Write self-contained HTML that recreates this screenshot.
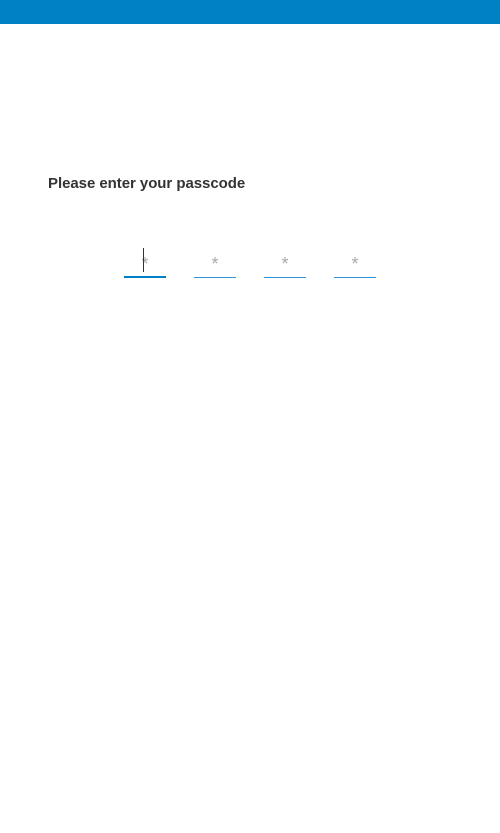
<!DOCTYPE html>
<html><head><style>
body{margin:0;width:500px;height:833px;background:#fff;position:relative;overflow:hidden;font-family:"Liberation Sans",sans-serif}
.bar{position:absolute;left:0;top:0;width:500px;height:24px;background:#0081c6}
.t{position:absolute;left:48px;top:175px;font-size:15px;font-weight:bold;color:#333;letter-spacing:-0.05px}
.f{position:absolute;top:250px;width:42px;height:28px}
.f span{position:absolute;left:0;width:42px;text-align:center;top:4px;font-size:18px;color:#aaa}
.f i{position:absolute;left:0;bottom:0;width:42px;height:1px;background:#2f95da}
.f.a i{height:2px;background:#0081c6}
.cur{position:absolute;left:143px;top:248px;width:1px;height:24px;background:#333}
</style></head><body>
<div class="bar"></div>
<div class="t">Please enter your passcode</div>
<div class="f a" style="left:124px"><span>*</span><i></i></div>
<div class="f" style="left:194px"><span>*</span><i></i></div>
<div class="f" style="left:264px"><span>*</span><i></i></div>
<div class="f" style="left:334px"><span>*</span><i></i></div>
<div class="cur"></div>
</body></html>
